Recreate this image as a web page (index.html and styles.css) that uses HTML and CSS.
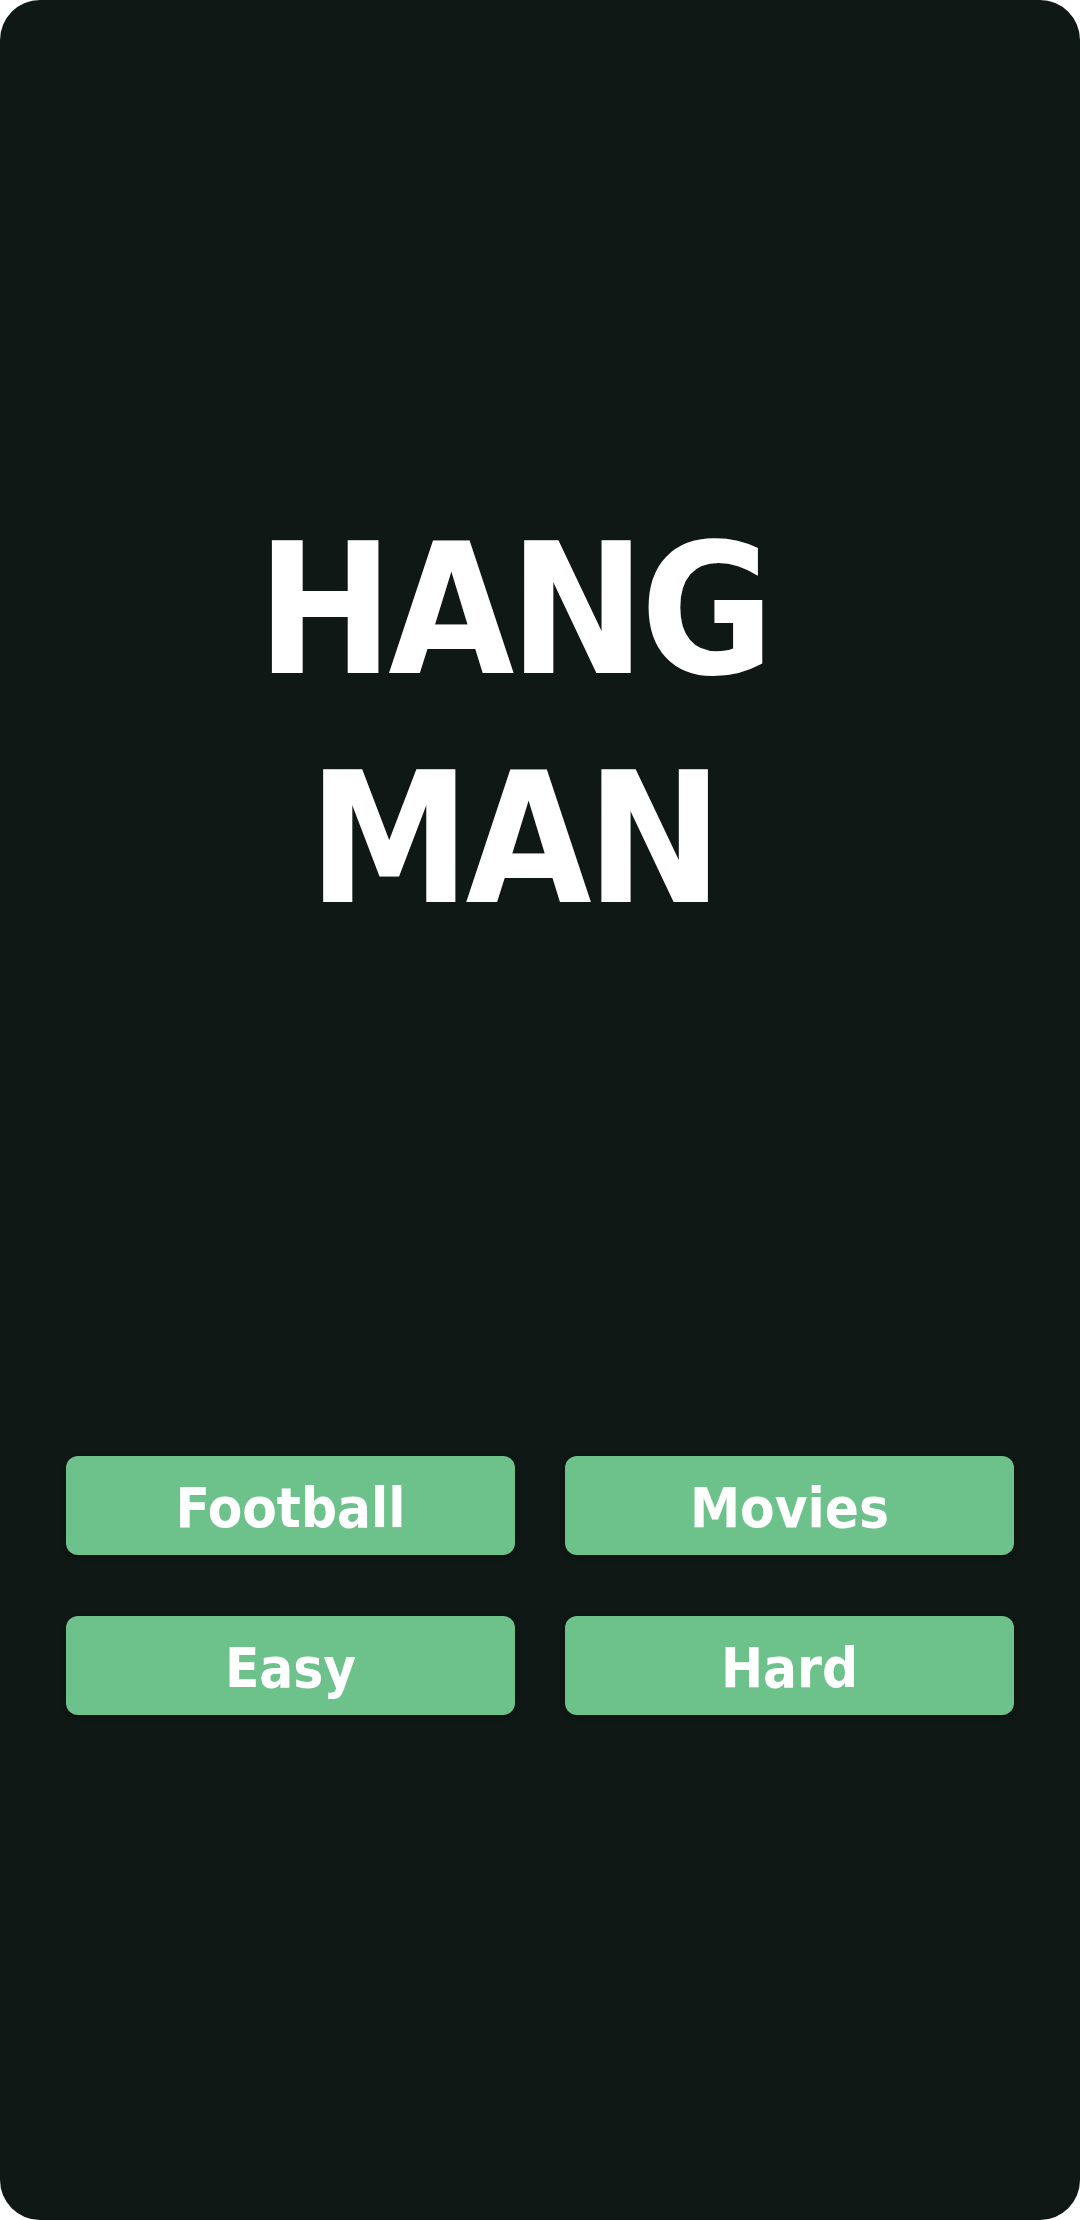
FILE: index.html
```html
<!DOCTYPE html>
<html lang="en">
<head>
<meta charset="utf-8">
<title>Hangman</title>
<link rel="stylesheet" href="styles.css">
</head>
<body>
<main class="screen">
  <h1 class="title">
    <span class="title-line">HANG</span>
    <span class="title-line">MAN</span>
  </h1>
  <div class="choices">
    <button class="choice">Football</button>
    <button class="choice">Movies</button>
    <button class="choice">Easy</button>
    <button class="choice">Hard</button>
  </div>
</main>
</body>
</html>
```

FILE: styles.css
```css
html, body {
  margin: 0;
  padding: 0;
  background: #ffffff;
}

.screen {
  box-sizing: border-box;
  width: 1080px;
  height: 2220px;
  background: #101815;
  border-radius: 40px;
  overflow: hidden;
  padding: 496px 66px 0;
  display: flex;
  flex-direction: column;
}

.title {
  margin: 0;
  padding-right: 54px;
  display: flex;
  flex-direction: column;
  align-items: center;
  color: #ffffff;
  font-family: "DejaVu Sans Condensed", "DejaVu Sans", sans-serif;
  font-stretch: condensed;
  font-weight: 700;
  font-size: 181px;
  line-height: 229px;
  letter-spacing: -5px;
}

.title-line {
  display: block;
}

.choices {
  margin-top: 502px;
  display: grid;
  grid-template-columns: 1fr 1fr;
  column-gap: 50px;
  row-gap: 61px;
}

.choice {
  height: 99px;
  border: none;
  border-radius: 12px;
  background: #6dc28b;
  color: #ffffff;
  font-family: "DejaVu Sans Condensed", "DejaVu Sans", sans-serif;
  font-stretch: condensed;
  font-weight: 700;
  font-size: 56px;
  line-height: 56px;
  padding: 4px 0 0;
  box-shadow: 0 2px 4px rgba(0, 0, 0, 0.35);
  display: flex;
  align-items: center;
  justify-content: center;
}
```
